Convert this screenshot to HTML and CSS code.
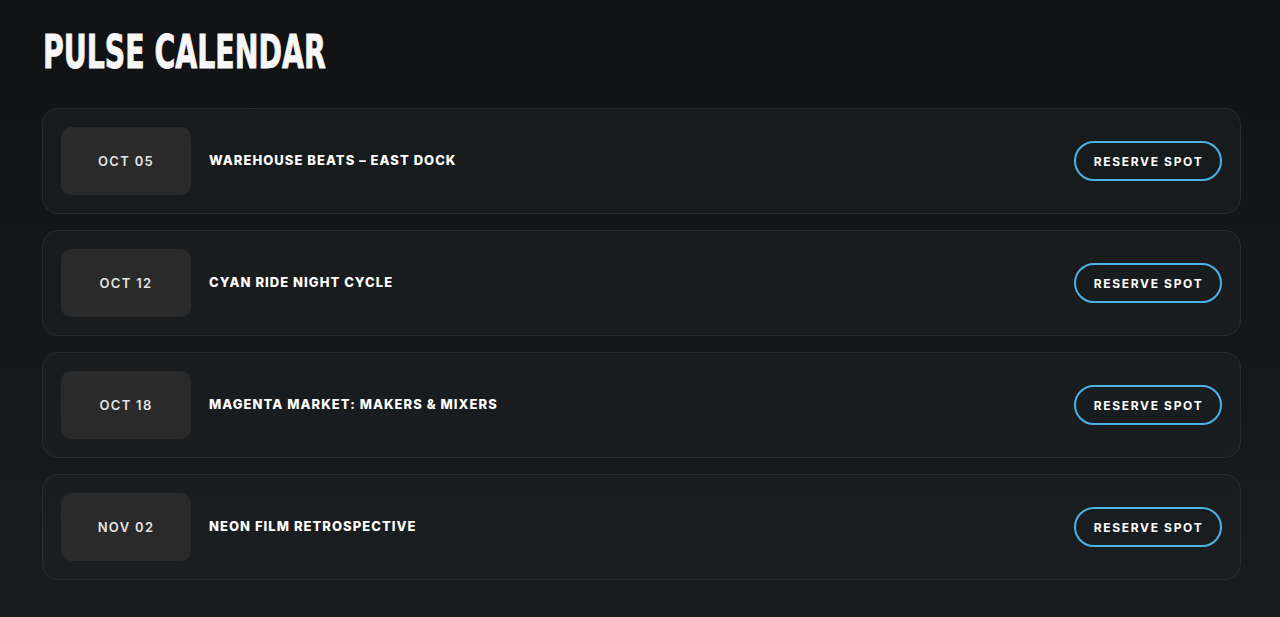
FILE: index.html
```html
<!DOCTYPE html>
<html lang="en">
<head>
<meta charset="utf-8">
<title>Pulse Calendar</title>
<link rel="stylesheet" href="styles.css">
</head>
<body>
<main class="page">
  <h1 class="title"><span class="title-text">PULSE CALENDAR</span></h1>
  <ul class="events">
    <li class="event">
      <div class="date">OCT 05</div>
      <div class="name">WAREHOUSE BEATS – EAST DOCK</div>
      <button class="reserve">RESERVE SPOT</button>
    </li>
    <li class="event">
      <div class="date">OCT 12</div>
      <div class="name">CYAN RIDE NIGHT CYCLE</div>
      <button class="reserve">RESERVE SPOT</button>
    </li>
    <li class="event">
      <div class="date">OCT 18</div>
      <div class="name">MAGENTA MARKET: MAKERS &amp; MIXERS</div>
      <button class="reserve">RESERVE SPOT</button>
    </li>
    <li class="event">
      <div class="date">NOV 02</div>
      <div class="name">NEON FILM RETROSPECTIVE</div>
      <button class="reserve">RESERVE SPOT</button>
    </li>
  </ul>
</main>
</body>
</html>
```
FILE: styles.css
```css
html, body {
  margin: 0;
  padding: 0;
  height: 100%;
}
body {
  background: linear-gradient(180deg, #111213 0%, #181c1f 100%);
  color: #f5f5f5;
  font-family: "Inter", "Liberation Sans", sans-serif;
}
.page {
  padding: 26px 39px 0 42px;
}
.title {
  margin: 0 0 30px 0;
  height: 52px;
  font-family: "DejaVu Sans Condensed", "DejaVu Sans", sans-serif;
  font-weight: 700;
  font-size: 46px;
  line-height: 52px;
  letter-spacing: 0;
  color: #f7f7f7;
}
.title-text {
  display: inline-block;
  margin-left: 1px;
  transform: scale(0.685, 1.0);
  transform-origin: left center;
  -webkit-text-stroke: 0.9px #f7f7f7;
}
.events {
  list-style: none;
  margin: 0;
  padding: 0;
  display: flex;
  flex-direction: column;
  gap: 16px;
}
.event {
  display: flex;
  align-items: center;
  padding: 18px;
  border: 1px solid #2a2d30;
  border-radius: 16px;
  background: rgba(30, 32, 35, 0.55);
}
.date {
  width: 130px;
  height: 68px;
  flex: none;
  display: flex;
  align-items: center;
  justify-content: center;
  background: #2a2a2a;
  border-radius: 10px;
  font-size: 13px;
  font-weight: 600;
  letter-spacing: 0.1em;
  color: #e4e4e4;
}
.name {
  flex: 1;
  margin-left: 18px;
  margin-bottom: 3px;
  font-size: 13px;
  font-weight: 800;
  letter-spacing: 0.08em;
  color: #ffffff;
}
.reserve {
  flex: none;
  width: 148px;
  height: 40px;
  border: 2px solid #4db2e6;
  border-radius: 20px;
  background: transparent;
  color: #ffffff;
  font-family: "Inter", "Liberation Sans", sans-serif;
  font-size: 12px;
  font-weight: 700;
  letter-spacing: 0.14em;
  padding: 0 0 0 1px;
  cursor: pointer;
}
```
